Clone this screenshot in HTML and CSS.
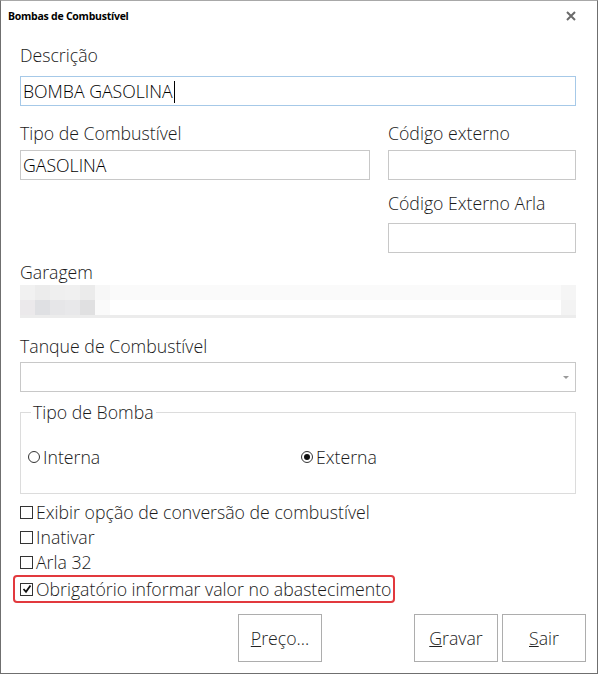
FILE: index.html
```html
<!DOCTYPE html>
<html lang="pt">
<head>
<meta charset="utf-8">
<title>Bombas de Combustível</title>
<link rel="stylesheet" href="styles.css">
</head>
<body>
<div class="window">
  <div class="titlebar">
    <span class="title">Bombas de Combustível</span>
    <svg class="close" width="10" height="10" viewBox="0 0 10 10"><path d="M1 1 L9 9 M9 1 L1 9" stroke="#6a6a6a" stroke-width="2"/></svg>
  </div>
  <div class="content">
    <div class="label l-desc">Descrição</div>
    <div class="input focus">BOMBA GASOLINA<span class="caret"></span></div>

    <div class="row2">
      <div class="col-left">
        <div class="label l-tipo">Tipo de Combustível</div>
        <div class="input">GASOLINA</div>
      </div>
      <div class="col-right">
        <div class="label l-tipo">Código externo</div>
        <div class="input"></div>
        <div class="label l-arla">Código Externo Arla</div>
        <div class="input"></div>
      </div>
    </div>

    <div class="label l-gar">Garagem</div>
    <div class="blur">
      <div class="brow r1"><i class="c1"></i><i class="c2"></i><i class="c3"></i><i class="c4"></i><i class="c5"></i><i class="c6"></i><i class="fill"></i><i class="end"></i></div>
      <div class="brow r2"><i class="c1"></i><i class="c2"></i><i class="c3"></i><i class="c4"></i><i class="c5"></i><i class="c6"></i><i class="fill"></i><i class="end"></i></div>
      <div class="strip"></div>
    </div>

    <div class="label l-tanque">Tanque de Combustível</div>
    <div class="select"><span class="arrow"></span></div>

    <fieldset class="group">
      <legend>Tipo de Bomba</legend>
      <div class="radios">
        <div class="radio r-int"><span class="rcircle"></span><span>Interna</span></div>
        <div class="radio"><span class="rcircle on"></span><span>Externa</span></div>
      </div>
    </fieldset>

    <div class="checks">
      <div class="check"><span class="box"></span><span>Exibir opção de conversão de combustível</span></div>
      <div class="check"><span class="box"></span><span>Inativar</span></div>
      <div class="check"><span class="box"></span><span>Arla 32</span></div>
      <div class="check highlight"><span class="box checked"><svg width="10" height="10" viewBox="0 0 10 10"><path d="M1.5 5 L4 7.8 L8.5 1.5" stroke="#111" stroke-width="1.8" fill="none"/></svg></span><span>Obrigatório informar valor no abastecimento</span></div>
    </div>

    <div class="buttons">
      <div class="btn b-preco"><span><u>P</u>reço...</span></div>
      <div class="btn b-gravar"><span><u>G</u>ravar</span></div>
      <div class="btn"><span><u>S</u>air</span></div>
    </div>
  </div>
</div>
</body>
</html>
```
FILE: styles.css
```css
html, body {
  margin: 0;
  padding: 0;
  background: #ffffff;
}
body {
  font-family: "Open Sans", "Noto Sans", sans-serif;
  font-size: 17.7px;
  font-weight: 300;
  color: #1a1a1a;
}
.window {
  width: 598px;
  height: 674px;
  box-sizing: border-box;
  border: 1px solid #6f6f6f;
  border-top-color: #a8a8a8;
  background: #ffffff;
  display: flex;
  flex-direction: column;
  overflow: hidden;
}
.titlebar {
  height: 29px;
  flex-shrink: 0;
  display: flex;
  align-items: center;
  justify-content: space-between;
  padding: 0 21px 0 7px;
}
.title {
  font-weight: 700;
  font-size: 10.5px;
  letter-spacing: -0.25px;
  color: #000000;
}
.close {
  display: block;
}
.content {
  padding: 0 21px 0 19px;
  display: flex;
  flex-direction: column;
}
.label {
  line-height: 20px;
  height: 20px;
  white-space: nowrap;
}
.l-desc { margin-top: 15px; margin-bottom: 11px; }
.l-tipo { margin-top: 17px; margin-bottom: 7px; }
.l-arla { margin-top: 13px; margin-bottom: 10px; }
.l-gar { margin-top: 9px; margin-bottom: 3px; }
.l-tanque { margin-top: 18px; margin-bottom: 6px; }

.input, .select {
  height: 30px;
  box-sizing: border-box;
  border: 1px solid #c8c8c8;
  padding: 0 2px;
  line-height: 28px;
  color: #000000;
  white-space: nowrap;
  position: relative;
}
.input.focus {
  border-color: #a6c9e8;
}
.caret {
  display: inline-block;
  width: 1px;
  height: 22px;
  background: #000;
  vertical-align: middle;
  margin-left: 1px;
  margin-top: -3px;
}
.row2 {
  display: grid;
  grid-template-columns: 350px 188px;
  column-gap: 18px;
}
.col-left, .col-right {
  display: flex;
  flex-direction: column;
}

.blur {
  height: 33px;
  display: flex;
  flex-direction: column;
}
.brow {
  height: 15px;
  display: flex;
}
.brow i {
  display: block;
  width: 15px;
  height: 15px;
}
.brow i.fill { flex: 1; }
.r1 .c1 { background: #f1f1f1; }
.r1 .c2 { background: #ececec; }
.r1 .c3 { background: #efefef; }
.r1 .c4 { background: #f0f0f0; }
.r1 .c5 { background: #ebebeb; }
.r1 .c6 { background: #f7f7f7; }
.r1 .fill { background: #fafafa; }
.r1 .end { background: #f5f5f5; }
.r2 .c1 { background: #ebe9eb; }
.r2 .c2 { background: #dfe0e3; }
.r2 .c3 { background: #e6e6e8; }
.r2 .c4 { background: #e8e8ea; }
.r2 .c5 { background: #e0e0e1; }
.r2 .c6 { background: #fafafa; }
.r2 .fill { background: #ffffff; }
.r2 .end { background: #f3f3f3; }
.strip {
  height: 3px;
  background: #ececec;
}

.select .arrow {
  position: absolute;
  right: 6px;
  top: 13px;
  width: 0;
  height: 0;
  border-left: 3px solid transparent;
  border-right: 3px solid transparent;
  border-top: 3px solid #9a9a9a;
}

.group {
  margin: 10px 0 0 0;
  padding: 0 10px;
  border: 1px solid #dcdcdc;
  height: 92px;
  box-sizing: border-box;
  min-width: 0;
}
.group legend {
  padding: 0 2px;
  line-height: 20px;
}
.radios {
  display: flex;
  margin-top: 25px;
  margin-left: -3px;
}
.radio {
  display: flex;
  align-items: center;
  gap: 3px;
  line-height: 20px;
}
.r-int {
  width: 273px;
}
.rcircle {
  width: 10px;
  height: 10px;
  border: 1px solid #333;
  border-radius: 50%;
  box-sizing: content-box;
  position: relative;
}
.rcircle.on::after {
  content: "";
  position: absolute;
  left: 2px;
  top: 2px;
  width: 6px;
  height: 6px;
  border-radius: 50%;
  background: #111;
}

.checks {
  margin-top: 8px;
  display: flex;
  flex-direction: column;
  gap: 5px;
}
.check {
  display: flex;
  align-items: center;
  gap: 3px;
  line-height: 20px;
  white-space: nowrap;
}
.box {
  width: 11px;
  height: 11px;
  border: 1px solid #333;
  position: relative;
  display: flex;
  align-items: center;
  justify-content: center;
  flex-shrink: 0;
}
.box svg { display: block; }
.check.highlight {
  align-self: flex-start;
  margin-left: -7px;
  margin-top: -2px;
  padding: 2px 2px 2px 5px;
  border: 2px solid #e2393e;
  border-radius: 4px;
}

.buttons {
  display: flex;
  margin-top: 11px;
}
.btn {
  width: 84px;
  height: 48px;
  flex-shrink: 0;
  box-sizing: border-box;
  border: 1px solid #adadad;
  display: flex;
  align-items: center;
  justify-content: center;
  color: #222;
}
.b-preco { margin-left: 218px; }
.b-gravar { margin-left: 92px; margin-right: 4px; }
```
